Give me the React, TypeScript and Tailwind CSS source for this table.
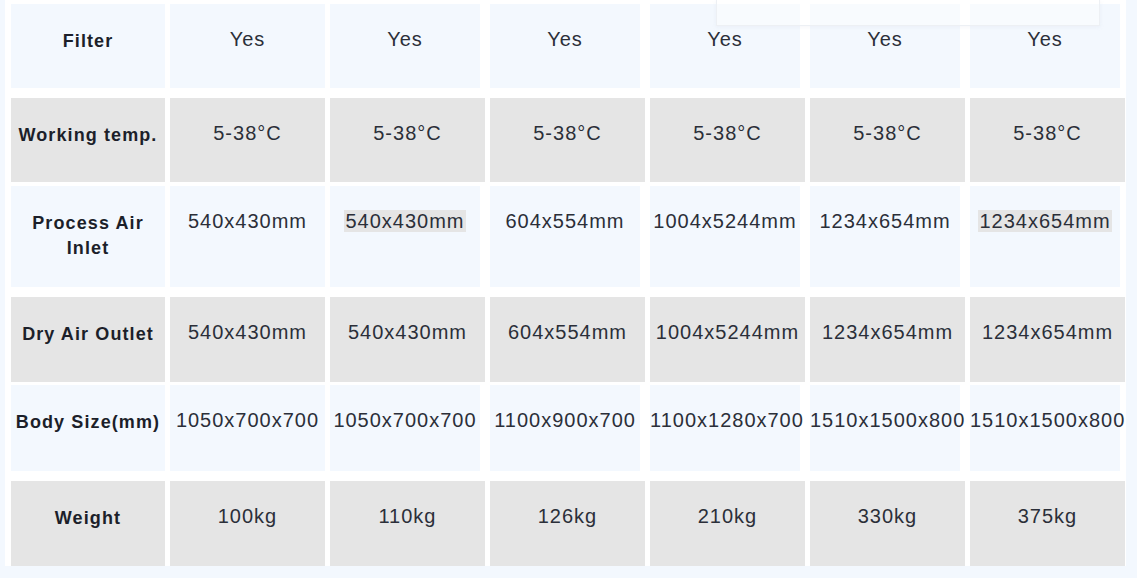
const rows: { label: string[]; values: string[]; tone: 'blue' | 'gray'; h: string; gap: string; marked?: number[] }[] = [
  { label: ['Filter'], values: ['Yes', 'Yes', 'Yes', 'Yes', 'Yes', 'Yes'], tone: 'blue', h: 'h-[84px]', gap: 'mb-[10px]' },
  { label: ['Working temp.'], values: ['5-38°C', '5-38°C', '5-38°C', '5-38°C', '5-38°C', '5-38°C'], tone: 'gray', h: 'h-[84px]', gap: 'mb-[4px]' },
  {
    label: ['Process Air', 'Inlet'],
    values: ['540x430mm', '540x430mm', '604x554mm', '1004x5244mm', '1234x654mm', '1234x654mm'],
    tone: 'blue',
    h: 'h-[101px]',
    gap: 'mb-[10px]',
    marked: [1, 5],
  },
  { label: ['Dry Air Outlet'], values: ['540x430mm', '540x430mm', '604x554mm', '1004x5244mm', '1234x654mm', '1234x654mm'], tone: 'gray', h: 'h-[85px]', gap: 'mb-[3px]' },
  { label: ['Body Size(mm)'], values: ['1050x700x700', '1050x700x700', '1100x900x700', '1100x1280x700', '1510x1500x800', '1510x1500x800'], tone: 'blue', h: 'h-[86px]', gap: 'mb-[10px]' },
  { label: ['Weight'], values: ['100kg', '110kg', '126kg', '210kg', '330kg', '375kg'], tone: 'gray', h: 'h-[85px]', gap: '' },
]

export default function App() {
  return (
    <div className="relative min-h-screen bg-[#f3f8fe]" style={{ fontFamily: '"Liberation Sans", Arial, sans-serif' }}>
      <div className="ml-[5px] w-[1121px] bg-white pl-[6px] pt-[4px]">
        {rows.map((row) => {
          const bg = row.tone === 'blue' ? 'bg-[#f3f8fe]' : 'bg-[#e5e5e5]'
          return (
            <div key={row.label.join(' ')} className={`flex gap-[5px] ${row.h} ${row.gap}`}>
              <div className={`w-[154px] shrink-0 ${bg} pt-[25px] text-center text-[18px] leading-[25px] font-bold tracking-[1.1px] text-[#1c1f2a]`}>
                {row.label.map((l) => (
                  <div key={l}>{l}</div>
                ))}
              </div>
              {row.values.map((v, i) => {
                // the blue cells from the third column on sit 5px narrower
                const narrow = row.tone === 'blue' && i >= 1
                return (
                  <div
                    key={i}
                    className={`w-[155px] shrink-0 ${bg} ${narrow ? 'border-r-[5px] border-white' : ''} pt-[23px] text-center text-[20px] leading-[24px] tracking-[1px] text-[#2b2f39] whitespace-nowrap`}
                  >
                    {row.marked?.includes(i) ? <span className="bg-[#e5e5e5] px-px">{v}</span> : v}
                  </div>
                )
              })}
            </div>
          )
        })}
      </div>
      <div className="absolute left-[716px] top-0 h-[26px] w-[384px] border border-t-0 border-[#edf0f4] bg-white/40 shadow-[0_1px_4px_rgba(180,190,205,0.15)]" />
    </div>
  )
}
